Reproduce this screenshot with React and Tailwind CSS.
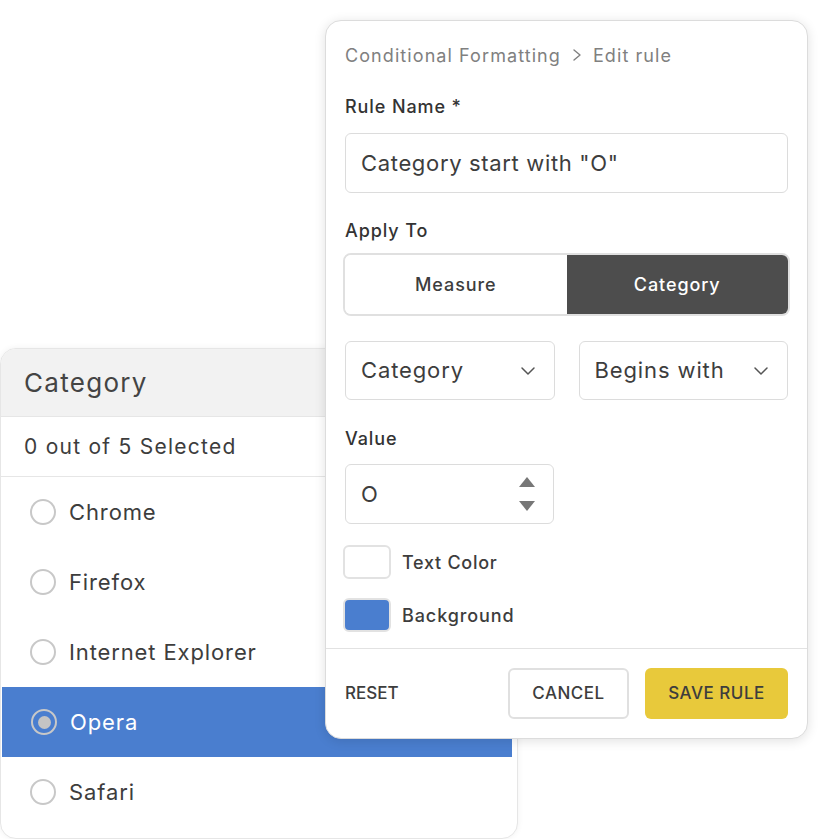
import React from 'react';

const browsers = ['Chrome', 'Firefox', 'Internet Explorer', 'Opera', 'Safari'];

const Chevron = () => (
  <svg width="16" height="10" viewBox="0 0 16 10" fill="none" stroke="#555" strokeWidth="1.5" strokeLinecap="round" strokeLinejoin="round">
    <path d="M2 2l6 6 6-6" />
  </svg>
);

const CategoryList = () => {
  const selected = 'Opera';
  return (
    <div className="w-[518px] h-[491px] mt-[348px] rounded-2xl border border-[#e6e6e6] bg-white overflow-hidden shadow-[0_0_6px_rgba(0,0,0,0.06)]">
      <div className="h-[68px] bg-[#f2f2f2] flex items-center px-[23px] border-b border-[#e6e6e6]">
        <span className="text-[26px] tracking-[0.05em] text-[#444]">Category</span>
      </div>
      <div className="h-[60px] flex items-center px-[23px] border-b border-[#e6e6e6]">
        <span className="text-[21px] tracking-[0.06em] text-[#3d3d3d]">0 out of 5 Selected</span>
      </div>
      {browsers.map(name => {
        const active = name === selected;
        return (
          <div
            key={name}
            className={`h-[70px] flex items-center pl-[29px] gap-[13px] ${active ? 'bg-[#4a7ecf] w-[510px] ml-px' : ''}`}
          >
            <span className="w-[26px] h-[26px] rounded-full border-2 border-[#c8c8c8] flex items-center justify-center">
              {active && <span className="w-[13px] h-[13px] rounded-full bg-[#c4c4c4]" />}
            </span>
            <span className={`text-[22px] tracking-[0.04em] ${active ? 'text-white' : 'text-[#3d3d3d]'}`}>{name}</span>
          </div>
        );
      })}
    </div>
  );
};

const EditRule = () => (
  <div className="absolute left-[325px] top-[20px] w-[483px] h-[719px] bg-white rounded-2xl border border-[#dcdcdc] shadow-[0_2px_12px_rgba(0,0,0,0.12)] flex flex-col">
    <div className="px-[19px] pt-[21px] flex-1">
      <div className="flex items-center gap-[10px] text-[18px] tracking-[0.06em] text-[#808080] h-[26px]">
        <span>Conditional Formatting</span>
        <svg width="12" height="14" viewBox="0 0 12 14" fill="none" stroke="#808080" strokeWidth="1.4" strokeLinecap="round" strokeLinejoin="round">
          <path d="M3 2l6 5-6 5" />
        </svg>
        <span>Edit rule</span>
      </div>

      <div className="mt-[25px] text-[18px] tracking-[0.05em] font-medium text-[#333]">Rule Name *</div>
      <div className="mt-[13px] h-[60px] rounded-md border border-[#dcdcdc] flex items-center px-[15px]">
        <span className="text-[22px] tracking-[0.03em] text-[#3d3d3d]">Category start with "O"</span>
      </div>

      <div className="mt-[24px] text-[18px] tracking-[0.05em] font-medium text-[#333]">Apply To</div>
      <div className="mt-[9px] -mx-[2px] h-[63px] grid grid-cols-2 rounded-lg border-2 border-[#e0e0e0] overflow-hidden">
        <div className="flex items-center justify-center bg-white text-[18px] tracking-[0.05em] font-medium text-[#3d3d3d]">Measure</div>
        <div className="flex items-center justify-center bg-[#4d4d4d] text-[18px] tracking-[0.05em] font-medium text-white">Category</div>
      </div>

      <div className="mt-[25px] grid grid-cols-2 gap-[24px]">
        <div className="h-[59px] rounded-md border border-[#dcdcdc] flex items-center justify-between pl-[15px] pr-[18px]">
          <span className="text-[22px] tracking-[0.04em] text-[#3d3d3d]">Category</span>
          <Chevron />
        </div>
        <div className="h-[59px] rounded-md border border-[#dcdcdc] flex items-center justify-between pl-[15px] pr-[18px]">
          <span className="text-[22px] tracking-[0.04em] text-[#3d3d3d]">Begins with</span>
          <Chevron />
        </div>
      </div>

      <div className="mt-[25px] text-[18px] tracking-[0.05em] font-medium text-[#333]">Value</div>
      <div className="mt-[12px] w-[209px] h-[60px] rounded-md border border-[#dcdcdc] flex items-center justify-between pl-[15px] pr-[17px]">
        <span className="text-[22px] text-[#3d3d3d]">O</span>
        <svg width="18" height="38" viewBox="0 0 18 38" fill="#777">
          <path d="M9 2L17 12H1z" />
          <path d="M1 26H17L9 36z" />
        </svg>
      </div>

      <div className="mt-[21px] -ml-[2px] flex items-center gap-[11px]">
        <span className="w-[48px] h-[34px] rounded-md border-2 border-[#e2e2e2] bg-white" />
        <span className="text-[18px] tracking-[0.04em] font-medium text-[#3d3d3d]">Text Color</span>
      </div>
      <div className="mt-[19px] -ml-[2px] flex items-center gap-[11px]">
        <span className="w-[48px] h-[34px] rounded-md border-2 border-[#e2e2e2] bg-[#4a7ecf]" />
        <span className="text-[18px] tracking-[0.05em] font-medium text-[#3d3d3d]">Background</span>
      </div>
    </div>

    <div className="border-t border-[#e2e2e2] h-[90px] flex items-center pl-[19px] pr-[19px]">
      <span className="text-[17px] font-medium text-[#3d3d3d]">RESET</span>
      <div className="ml-auto flex gap-[16px]">
        <div className="w-[121px] h-[51px] rounded-md border-2 border-[#e0e0e0] flex items-center justify-center text-[17px] tracking-[0.03em] font-medium text-[#3d3d3d]">CANCEL</div>
        <div className="w-[143px] h-[51px] rounded-md bg-[#e8c93b] flex items-center justify-center text-[17px] tracking-[0.03em] font-medium text-[#3d3d3d]">SAVE RULE</div>
      </div>
    </div>
  </div>
);

export default function App() {
  return (
    <div className="relative w-[828px] h-[839px] bg-white overflow-hidden font-['Inter',sans-serif]">
      <CategoryList />
      <EditRule />
    </div>
  );
}
